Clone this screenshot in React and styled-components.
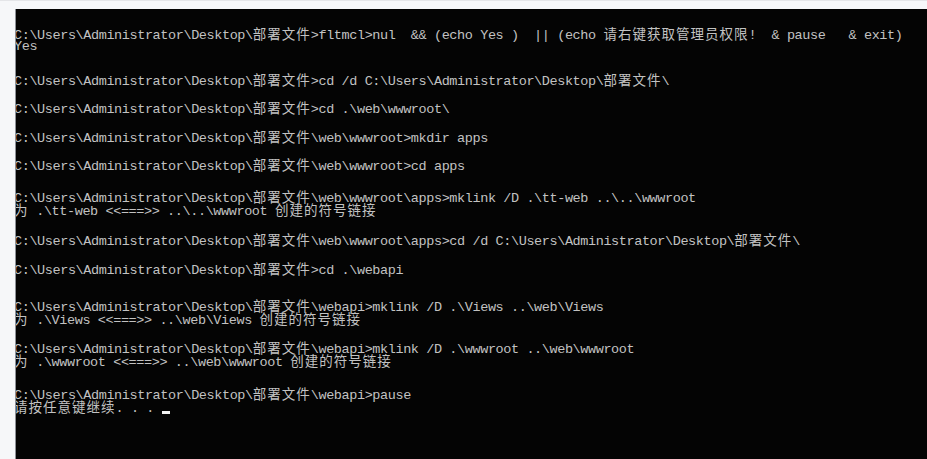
import styled, { createGlobalStyle } from 'styled-components'

const Global = createGlobalStyle`
    html, body {
        margin: 0;
        padding: 0;
        background: #f6f7f9;
    }
`

const Page = styled.div`
    width: 927px;
    height: 459px;
    display: flex;
    flex-flow: column;
    padding: 8px 0 0 15px;
    box-sizing: border-box;
    background: #f6f7f9;
    border-top: 1px solid #e4e5e8;
`

const Console = styled.div`
    flex: 1;
    background: #040404;
    border-left: 1px solid #8d9096;
    overflow: hidden;
    padding-top: 18px;
    display: flex;
    flex-flow: column;
`

const Group = styled.div`
    margin-top: ${p => p.$gap}px;
    margin-left: -2px;
`

const Line = styled.div`
    height: 13px;
    line-height: 13px;
    white-space: pre;
    color: #c2c2c2;
    font-family: "Liberation Mono", "DejaVu Sans Mono", monospace;
    font-size: 13.5px;
    letter-spacing: -0.4px;
`

const Wide = styled.span`
    font-family: "Noto Sans CJK SC", "Noto Sans", sans-serif;
    font-size: 13.5px;
    letter-spacing: 1px;
`

const Cursor = styled.span`
    display: inline-block;
    width: 8px;
    height: 3px;
    background: #f2f2f2;
    vertical-align: -2px;
`

const base = 'C:\\Users\\Administrator\\Desktop\\部署文件'

const groups = [
    { gap: 0, lines: [
        base + '>fltmcl>nul  && (echo Yes )  || (echo 请右键获取管理员权限!  & pause   & exit)',
        'Yes',
    ] },
    { gap: 20, lines: [base + '>cd /d C:\\Users\\Administrator\\Desktop\\部署文件\\'] },
    { gap: 15, lines: [base + '>cd .\\web\\wwwroot\\'] },
    { gap: 16, lines: [base + '\\web\\wwwroot>mkdir apps'] },
    { gap: 15, lines: [base + '\\web\\wwwroot>cd apps'] },
    { gap: 19, lines: [
        base + '\\web\\wwwroot\\apps>mklink /D .\\tt-web ..\\..\\wwwroot',
        '为 .\\tt-web <<===>> ..\\..\\wwwroot 创建的符号链接',
    ] },
    { gap: 17, lines: [base + '\\web\\wwwroot\\apps>cd /d C:\\Users\\Administrator\\Desktop\\部署文件\\'] },
    { gap: 16, lines: [base + '>cd .\\webapi'] },
    { gap: 24, lines: [
        base + '\\webapi>mklink /D .\\Views ..\\web\\Views',
        '为 .\\Views <<===>> ..\\web\\Views 创建的符号链接',
    ] },
    { gap: 16, lines: [
        base + '\\webapi>mklink /D .\\wwwroot ..\\web\\wwwroot',
        '为 .\\wwwroot <<===>> ..\\web\\wwwroot 创建的符号链接',
    ] },
    { gap: 20, lines: [
        base + '\\webapi>pause',
        '请按任意键继续. . . ',
    ], cursor: true },
]

// wrap runs of CJK characters so they take double width like in cmd
function Text({ value }) {
    const parts = value.split(/([\u3000-\u9fff\uff00-\uffef]+)/)
    return parts.map((part, i) =>
        i % 2 === 1 ? <Wide key={i}>{part}</Wide> : part
    )
}

export default function App() {
    return (
        <>
            <Global />
            <Page>
                <Console>
                    {groups.map((group, gi) => (
                        <Group key={gi} $gap={group.gap}>
                            {group.lines.map((line, li) => (
                                <Line key={li}>
                                    <Text value={line} />
                                    {group.cursor && li === group.lines.length - 1 && <Cursor />}
                                </Line>
                            ))}
                        </Group>
                    ))}
                </Console>
            </Page>
        </>
    )
}
